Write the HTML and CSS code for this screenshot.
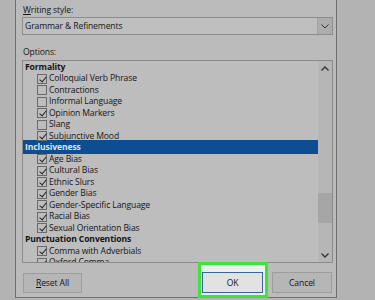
FILE: index.html
```html
<!DOCTYPE html>
<html>
<head>
<meta charset="utf-8">
<link rel="stylesheet" href="styles.css">
</head>
<body>
<div class="dialog">
  <div class="label lbl-style"><u>W</u>riting style:</div>
  <div class="combo">
    <span class="combo-text">Grammar &amp; Refinements</span>
    <span class="combo-btn"><svg width="8" height="5" viewBox="0 0 8 5"><path d="M0.5 0.5 L4 4 L7.5 0.5" fill="none" stroke="#333" stroke-width="1"/></svg></span>
  </div>
  <div class="label lbl-options">Options:</div>
  <div class="listbox">
    <div class="rows">
      <div class="row head">Formality</div>
      <div class="row"><span class="cb on"></span>Colloquial Verb Phrase</div>
      <div class="row"><span class="cb"></span>Contractions</div>
      <div class="row"><span class="cb"></span>Informal Language</div>
      <div class="row"><span class="cb on"></span>Opinion Markers</div>
      <div class="row"><span class="cb"></span>Slang</div>
      <div class="row"><span class="cb on"></span>Subjunctive Mood</div>
      <div class="row head sel">Inclusiveness</div>
      <div class="row"><span class="cb on"></span>Age Bias</div>
      <div class="row"><span class="cb on"></span>Cultural Bias</div>
      <div class="row"><span class="cb on"></span>Ethnic Slurs</div>
      <div class="row"><span class="cb on"></span>Gender Bias</div>
      <div class="row"><span class="cb on"></span>Gender-Specific Language</div>
      <div class="row"><span class="cb on"></span>Racial Bias</div>
      <div class="row"><span class="cb on"></span>Sexual Orientation Bias</div>
      <div class="row head">Punctuation Conventions</div>
      <div class="row"><span class="cb on"></span>Comma with Adverbials</div>
      <div class="row"><span class="cb on"></span>Oxford Comma</div>
    </div>
    <div class="scrollbar">
      <span class="arrow up"><svg width="8" height="5" viewBox="0 0 8 5"><path d="M0.5 4.5 L4 1 L7.5 4.5" fill="none" stroke="#333" stroke-width="1.3"/></svg></span>
      <span class="track"><span class="thumb"></span></span>
      <span class="arrow down"><svg width="8" height="5" viewBox="0 0 8 5"><path d="M0.5 0.5 L4 4 L7.5 0.5" fill="none" stroke="#333" stroke-width="1.3"/></svg></span>
    </div>
  </div>
  <div class="buttons">
    <button class="btn reset"><u>R</u>eset All</button>
    <span class="spacer"></span>
    <span class="ok-wrap"><button class="btn ok">OK</button></span>
    <button class="btn cancel">Cancel</button>
  </div>
</div>
</body>
</html>
```
FILE: styles.css
```css
html, body {
  margin: 0;
  padding: 0;
}
body {
  background: #b3b3b3;
  width: 375px;
  height: 300px;
  overflow: hidden;
  font-family: "Open Sans", "Noto Sans", sans-serif;
  font-size: 8.6px;
  letter-spacing: -0.12px;
  color: #151515;
}
.dialog {
  margin-left: 15px;
  width: 322px;
  height: 298px;
  background: #bbbbbb;
  border-left: 1px solid #6f6f6f;
  border-right: 1px solid #6f6f6f;
  border-bottom: 1px solid #6f6f6f;
  padding: 0 4px 0 6px;
  box-sizing: border-box;
  display: flex;
  flex-direction: column;
}
.label {
  height: 14px;
  line-height: 14px;
  padding-left: 1px;
}
.lbl-style {
  margin-top: 3px;
}
.combo {
  height: 18px;
  box-sizing: border-box;
  border: 1px solid #8d8d8d;
  background: #bfbfbf;
  display: flex;
  align-items: stretch;
  width: 311px;
}
.combo-text {
  flex: 1;
  line-height: 16px;
  padding-left: 2px;
}
.combo-btn {
  width: 14px;
  background: #adadad;
  border-left: 1px solid #a3a3a3;
  display: flex;
  align-items: center;
  justify-content: center;
}
.lbl-options {
  margin-top: 10px;
}
.listbox {
  margin-top: 1px;
  width: 311px;
  height: 203px;
  box-sizing: border-box;
  border: 1px solid #8a8a8a;
  background: #bdbdbd;
  display: flex;
  overflow: hidden;
}
.rows {
  flex: 1;
  padding-top: 0.5px;
  overflow: hidden;
}
.row {
  height: 11.5px;
  line-height: 11.5px;
  display: flex;
  align-items: center;
  padding-left: 14px;
  white-space: nowrap;
}
.row.head {
  font-weight: 700;
  padding-left: 2px;
}
.row.sel {
  background: #0d4e93;
  color: #dde6ef;
  box-shadow: 0 -2px 0 #0d4e93;
}
.cb {
  width: 10px;
  height: 10px;
  box-sizing: border-box;
  border: 1px solid #6a6a6a;
  margin-right: 2px;
  position: relative;
  flex: none;
}
.cb.on::after {
  content: "";
  position: absolute;
  left: 2.5px;
  top: 0px;
  width: 3px;
  height: 6px;
  border-right: 1px solid #222;
  border-bottom: 1px solid #222;
  transform: rotate(40deg);
}
.scrollbar {
  width: 14px;
  background: #b6b6b6;
  display: flex;
  flex-direction: column;
}
.arrow {
  height: 14px;
  display: flex;
  align-items: center;
  justify-content: center;
}
.track {
  flex: 1;
  display: flex;
  flex-direction: column;
  padding-top: 118px;
}
.thumb {
  height: 30px;
  background: #a6a6a6;
}
.buttons {
  display: flex;
  margin-top: 9px;
  padding-left: 1px;
  align-items: flex-start;
}
.btn {
  font-family: inherit;
  font-size: 8.6px;
  letter-spacing: -0.12px;
  color: #151515;
  height: 21px;
  box-sizing: border-box;
  border: 1px solid #9d9d9d;
  background: #b6b6b6;
  padding: 0;
  margin: 0;
}
.reset {
  width: 59px;
  margin-top: 1px;
  height: 20px;
}
.spacer {
  flex: 1;
}
.ok-wrap {
  position: relative;
  display: flex;
}
.ok-wrap::before {
  content: "";
  position: absolute;
  left: -4px;
  top: -10px;
  right: -5px;
  bottom: -5px;
  border: 3px solid #3ee43e;
  background: #e9f2e9;
  box-sizing: border-box;
}
.ok {
  position: relative;
  width: 61px;
  background: #e2e2e2;
  border: 1px solid #3f63a0;
}
.cancel {
  width: 60px;
  margin-left: 9px;
}
```
